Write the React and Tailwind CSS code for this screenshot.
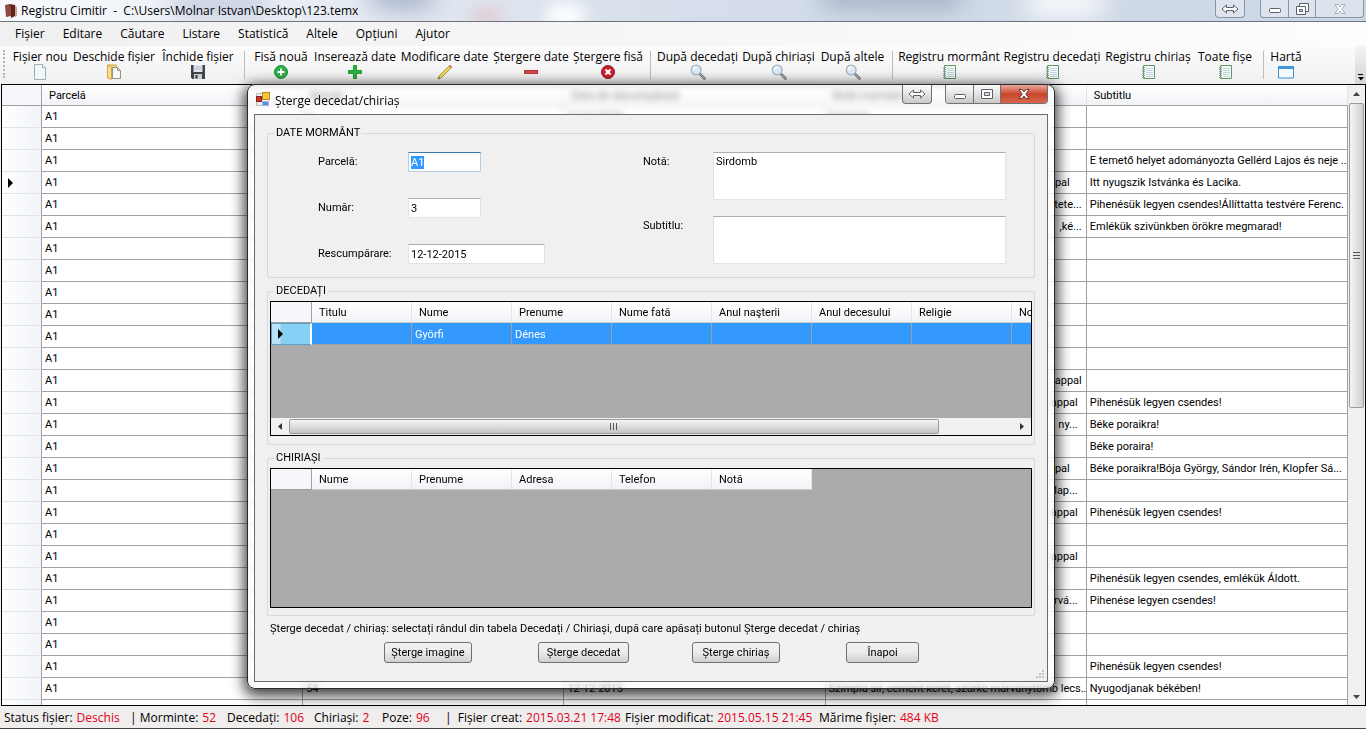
import { useEffect, useRef } from 'react'

const MENU = ['Fișier', 'Editare', 'Căutare', 'Listare', 'Statistică', 'Altele', 'Opțiuni', 'Ajutor']

const TOOLS = [
  { label: 'Fișier nou', icon: 'page', width: 'w-[62px]' },
  { label: 'Deschide fișier', icon: 'open', width: 'w-[86px]' },
  { label: 'Închide fișier', icon: 'save', width: 'w-[82px]' },
  { sep: true },
  { label: 'Fisă nouă', icon: 'addCircle', width: 'w-[62px]' },
  { label: 'Inserează date', icon: 'plus', width: 'w-[86px]' },
  { label: 'Modificare date', icon: 'pencil', width: 'w-[93px]' },
  { label: 'Ștergere date', icon: 'minus', width: 'w-[80px]' },
  { label: 'Ștergere fisă', icon: 'cancel', width: 'w-[74px]' },
  { sep: true },
  { label: 'După decedați', icon: 'search', width: 'w-[83px]' },
  { label: 'După chiriași', icon: 'search', width: 'w-[79px]' },
  { label: 'După altele', icon: 'search', width: 'w-[69px]' },
  { sep: true },
  { label: 'Registru mormânt', icon: 'notebook', width: 'w-[102px]' },
  { label: 'Registru decedați', icon: 'notebook', width: 'w-[104px]' },
  { label: 'Registru chiriaș', icon: 'notebook', width: 'w-[88px]' },
  { label: 'Toate fișe', icon: 'notebook', width: 'w-[66px]' },
  { sep: true },
  { label: 'Hartă', icon: 'window', width: 'w-[34px]' },
]

const ICONS = {
  page: (
    <svg width="16" height="16" viewBox="0 0 16 16">
      <path d="M2.5 .5h8l3 3v12h-11z" fill="#f1f8f8" stroke="#9fb0b0" />
      <path d="M10.5 .5v3h3" fill="#fff" stroke="#9fb0b0" />
    </svg>
  ),
  open: (
    <svg width="16" height="16" viewBox="0 0 16 16">
      <path d="M1.5 1h9v13h-9z" fill="#f3cf7c" stroke="#d3a545" />
      <path d="M6.5 3.5h5l3 3v8h-8z" fill="#f3fafb" stroke="#9a9478" />
      <path d="M11.500 3.500v3h3" fill="none" stroke="#9a9478" />
      <path d="M1.500 1l4 2.500v12l-4-2z" fill="#f8dc98" stroke="#d3a545" />
    </svg>
  ),
  save: (
    <svg width="16" height="16" viewBox="0 0 16 16">
      <path d="M1 1h14v14H2.500L1 13.500z" fill="#3d434b" />
      <path d="M3.500 1h9v7h-9z" fill="#dfe6ee" />
      <path d="M4.500 3h7M4.500 5h7" stroke="#b4bdc8" />
      <path d="M4 10h8v5H4z" fill="#c9ced5" />
      <path d="M5.500 11h2v3.500h-2z" fill="#2f343b" />
    </svg>
  ),
  addCircle: (
    <svg width="16" height="16" viewBox="0 0 16 16">
      <circle cx="8" cy="8" r="6.500" fill="#2fae45" stroke="#1d8f35" />
      <path d="M8 4.500v7M4.500 8h7" stroke="#fff" strokeWidth="2" />
    </svg>
  ),
  plus: (
    <svg width="16" height="16" viewBox="0 0 16 16">
      <path d="M6.500 1.500h3v5h5v3h-5v5h-3v-5h-5v-3h5z" fill="#27b53c" stroke="#1f9a34" />
    </svg>
  ),
  pencil: (
    <svg width="16" height="16" viewBox="0 0 16 16">
      <path d="M1 15l1.500-3.500L12 2l2 2-9.500 9.500z" fill="#ecd95c" stroke="#9c8a2c" strokeWidth=".8" />
      <path d="M12 2l1-1 2 2-1 1z" fill="#e2867c" stroke="#b0605a" strokeWidth=".6" />
      <path d="M1 15l.8-1.800 1 1z" fill="#333" />
    </svg>
  ),
  minus: (
    <svg width="16" height="16" viewBox="0 0 16 16">
      <rect x="1.500" y="6.500" width="13" height="3" fill="#d9474e" stroke="#b5333c" />
    </svg>
  ),
  cancel: (
    <svg width="16" height="16" viewBox="0 0 16 16">
      <circle cx="8" cy="8" r="6.500" fill="#c8202c" stroke="#a01822" />
      <path d="M5.500 5.500l5 5M10.500 5.500l-5 5" stroke="#fff" strokeWidth="2.200" />
    </svg>
  ),
  search: (
    <svg width="16" height="16" viewBox="0 0 16 16">
      <path d="M10 10l4.500 4.500" stroke="#777" strokeWidth="2.600" strokeLinecap="round" />
      <path d="M10.500 10.500l4 4" stroke="#c4c4c4" strokeLinecap="round" />
      <circle cx="6.200" cy="6" r="4.900" fill="#dcebf7" stroke="#a9b2ba" strokeWidth="1.300" />
      <path d="M3.500 5.500a3 3 0 0 1 3-2.300" fill="none" stroke="#fff" strokeWidth="1.200" />
    </svg>
  ),
  notebook: (
    <svg width="16" height="16" viewBox="0 0 16 16">
      <path d="M3.500 1.500h11v13h-11z" fill="#f4faf4" stroke="#5f9668" />
      <path d="M6 4.500h7M6 6.500h7M6 8.500h7M6 10.500h7M6 12.500h7" stroke="#c3d2e4" />
      <path d="M2 3.500h3M2 5.500h3M2 7.500h3M2 9.500h3M2 11.500h3M2 13.500h3" stroke="#8aa58f" />
    </svg>
  ),
  window: (
    <svg width="16" height="16" viewBox="0 0 16 16">
      <path d="M.5 2.500h15v11.500H.5z" fill="#f4f9fe" stroke="#3d8fd0" />
      <path d="M0 2h16v3H0z" fill="#3f97dc" />
    </svg>
  ),
}

// rows of the main grid: [number, redemption date, note, note padding, subtitle]
const ROWS = [
  ['1', '12-12-2015', 'Sírdomb', '', ''],
  [],
  ['', '', '', '', 'E temető helyet adományozta Gellérd Lajos és neje ...'],
  ['', '', 'pal', 'text-right pr-4', 'Itt nyugszik Istvánka és Lacika.'],
  ['', '', 'tete...', 'text-right pr-1', 'Pihenésük legyen csendes!Állíttatta testvére Ferenc.'],
  ['', '', ',ké...', 'text-right pr-1', 'Emlékük szivünkben örökre megmarad!'],
  [],
  [],
  [],
  [],
  [],
  [],
  ['', '', 'appal', 'text-right pr-1', ''],
  ['', '', 'appal', 'text-right pr-2', 'Pihenésük legyen csendes!'],
  ['', '', 'ny...', 'text-right pr-2', 'Béke poraikra!'],
  ['', '', '', '', 'Béke poraira!'],
  ['', '', 'pal', 'text-right pr-4', 'Béke poraikra!Bója György, Sándor Irén, Klopfer Sá...'],
  ['', '', 'lap...', 'text-right pr-2', ''],
  ['', '', 'appal', 'text-right pr-2', 'Pihenésük legyen csendes!'],
  [],
  ['', '', 'appal', 'text-right pr-2', ''],
  ['', '', '', '', 'Pihenésük legyen csendes, emlékük Áldott.'],
  ['', '', 'rvá...', 'text-right pr-2', 'Pihenése legyen csendes!'],
  [],
  [],
  ['', '', '', '', 'Pihenésük legyen csendes!'],
  ['54', '12-12-2015', 'Szimpla sír, cement keret, szürke márványtömb lecs...', '', 'Nyugodjanak békében!'],
]

const GRID_COLUMNS = ['Parcelă', 'Număr', 'Data de răscumpărare', 'Notă mormânt', 'Subtitlu']
const DECEASED_COLUMNS = ['Titulu', 'Nume', 'Prenume', 'Nume fată', 'Anul naşterii', 'Anul decesului', 'Religie', 'Notă']
const TENANT_COLUMNS = ['Nume', 'Prenume', 'Adresa', 'Telefon', 'Notă']

const STATUS = [
  { label: 'Status fișier:', value: 'Deschis', width: 'w-[126px]' },
  { label: '| Morminte:', value: '52', width: 'w-[97px]' },
  { label: 'Decedați:', value: '106', width: 'w-[87px]' },
  { label: 'Chiriași:', value: '2', width: 'w-[68px]' },
  { label: 'Poze:', value: '96', width: 'w-[63px]' },
  { label: '|  Fișier creat:', value: '2015.03.21 17:48', width: 'w-[180px]' },
  { label: 'Fișier modificat:', value: '2015.05.15 21:45', width: 'w-[194px]' },
  { label: 'Mărime fișier:', value: '484 KB', width: 'w-[140px]' },
]

function ResizeGlyph() {
  return (
    <svg width="18" height="10" viewBox="0 0 18 10">
      <path d="M1 5l4.500-4v2.500h7V1L17 5l-4.500 4V6.500h-7V9z" fill="#fff" stroke="#5c6068" />
    </svg>
  )
}

function CloseGlyph({ stroke }) {
  return (
    <svg width="12" height="10" viewBox="0 0 12 10">
      <path d="M1 .5h3l2 2.500L8 .5h3L7.800 5 11 9.500H8L6 7 4 9.500H1L4.200 5z" fill="#fff" stroke={stroke} />
    </svg>
  )
}

function MinGlyph() {
  return (
    <svg width="12" height="5" viewBox="0 0 12 5">
      <rect x=".5" y=".5" width="11" height="4" rx="1" fill="#fff" stroke="#5c6068" />
    </svg>
  )
}

function TitleBar() {
  return (
    <header className="relative h-[22px] shrink-0 overflow-hidden border-b border-[#6b737d] bg-linear-to-r from-[#f7f9fc] via-[#d5deea] to-[#ccd7e5]">
      <div className="absolute -top-2 left-[170px] h-6 w-24 rounded-full bg-[#9aa6c6]/50 blur-md" />
      <div className="absolute -top-4 left-[370px] h-6 w-16 rounded-full bg-[#7482a8]/60 blur-md" />
      <div className="absolute top-2 left-[470px] h-4 w-8 rounded-full bg-[#e2b4b8]/60 blur-sm" />
      <div className="absolute top-1 left-[545px] h-6 w-10 rounded-full bg-white blur-sm" />
      <div className="absolute -top-4 left-[820px] h-6 w-36 rounded-full bg-[#8c98b4]/70 blur-md" />
      <div className="absolute -top-2 left-[1025px] h-6 w-20 rounded-full bg-white blur-md" />
      <div className="relative flex h-full items-center pl-1">
        <svg width="14" height="16" viewBox="0 0 14 16">
          <path d="M1 2l5-1 1 12-5 1z" fill="#8d4a3c" />
          <path d="M6 1l5 1v11l-4 2z" fill="#5d241d" />
          <path d="M11 3l2 1v9l-2 1z" fill="#c9a58f" />
        </svg>
        <h1 className="ml-[3px] flex-1 text-xs whitespace-pre text-black">Registru Cimitir  -  C:\Users\Molnar Istvan\Desktop\123.temx</h1>
        <button aria-label="Redimensionare" className="mr-[15px] flex h-[18px] w-[30px] items-center justify-center self-start rounded-b border border-t-0 border-[#8a94a3] bg-white/30">
          <ResizeGlyph />
        </button>
        <div className="mr-[2px] flex h-[18px] self-start overflow-hidden rounded-b border border-t-0 border-[#8a94a3] bg-white/30">
          <button aria-label="Minimizare" className="flex w-[28px] items-center justify-center border-r border-[#8a94a3] pt-1">
            <MinGlyph />
          </button>
          <button aria-label="Restaurare" className="flex w-[27px] items-center justify-center border-r border-[#8a94a3]">
            <svg width="13" height="12" viewBox="0 0 13 12">
              <path d="M3.500 .5h9v8h-9z" fill="#fff" stroke="#5c6068" />
              <path d="M.5 3.500h9v8h-9z" fill="#fff" stroke="#5c6068" />
              <path d="M3.500 6.500h3v2h-3z" fill="#dde" stroke="#5c6068" />
            </svg>
          </button>
          <button aria-label="Închidere" className="flex w-[47px] items-center justify-center">
            <CloseGlyph stroke="#a4adb9" />
          </button>
        </div>
      </div>
    </header>
  )
}

function Toolbar() {
  return (
    <div className="flex h-[38px] shrink-0 items-stretch bg-linear-to-b from-[#fcfcfc] to-[#f0f0f0]">
      <div className="mt-1 mr-1 ml-[3px] h-7 w-[2px] border-l-2 border-dotted border-[#b5b5b5]" />
      {TOOLS.map((tool, i) =>
        tool.sep ? (
          <div key={i} className="mx-[5px] mt-[5px] h-7 w-px shrink-0 bg-[#bdbdbd]" />
        ) : (
          <button key={i} className={`${tool.width} flex shrink-0 flex-col items-center pt-[3px] text-xs leading-[15px] whitespace-nowrap`}>
            {tool.label}
            {ICONS[tool.icon]}
          </button>
        ),
      )}
      <button aria-label="Mai multe" className="ml-auto flex w-[11px] flex-col items-center justify-end bg-linear-to-b from-[#f4f4f4] to-[#d4d4d4] pb-[3px]">
        <svg width="6" height="7" viewBox="0 0 6 7">
          <path d="M0 .5h5" stroke="#000" />
          <path d="M0 3h6L3 6.500z" fill="#000" />
        </svg>
      </button>
    </div>
  )
}

function MainGrid() {
  return (
    <main className="ml-px flex min-h-0 flex-1 border border-black bg-white font-[Roboto,'Liberation_Sans',sans-serif] text-[11px]">
      <div className="min-w-0 flex-1 overflow-hidden">
        <table className="w-full table-fixed border-separate border-spacing-0">
          <thead>
            <tr className="h-[21px]">
              <th className="w-10 border-r border-b border-[#a0a0a0] bg-[#f5f7fa]" />
              {GRID_COLUMNS.map((name) => (
                <th key={name} className="border-r border-b border-r-[#e1e4e8] border-b-[#a0a0a0] bg-linear-to-b from-white to-[#f1f3f6] pt-[2px] pl-[7px] text-left font-normal">
                  {name}
                </th>
              ))}
            </tr>
          </thead>
          <tbody>
            {ROWS.map(([number = '', date = '', note = '', notePad = '', subtitle = ''], i) => (
              <tr key={i} className="h-[22px] [&>td]:overflow-hidden [&>td]:border-r [&>td]:border-b [&>td]:border-[#a0a0a0] [&>td]:pt-[2px] [&>td]:whitespace-nowrap">
                <th className="border-r border-b border-r-[#a0a0a0] border-b-[#e1e4e8] bg-linear-to-r from-white to-[#f1f4f8] pl-[6px]">
                  {i === 3 && (
                    <svg width="6" height="10" viewBox="0 0 6 10">
                      <path d="M0 0l5 5-5 5z" fill="#000" />
                    </svg>
                  )}
                </th>
                <td className="pl-[3px]">A1</td>
                <td className="pl-[3px]">{number}</td>
                <td className="pl-[3px]">{date}</td>
                <td className={notePad || 'pl-[3px]'}>{note}</td>
                <td className="pl-[3px]">{subtitle}</td>
              </tr>
            ))}
            <tr className="h-[22px] [&>td]:border-r [&>td]:border-[#a0a0a0]">
              <th className="border-r border-[#a0a0a0] bg-linear-to-r from-white to-[#f1f4f8]" />
              <td /><td /><td /><td /><td />
            </tr>
          </tbody>
        </table>
      </div>
      <div className="flex w-[17px] shrink-0 flex-col items-center bg-[#f0f0f0]">
        <button aria-label="Sus" className="flex h-[18px] w-full items-center justify-center">
          <svg width="7" height="4" viewBox="0 0 7 4"><path d="M0 4l3.500-4L7 4z" fill="#444" /></svg>
        </button>
        <div className="flex h-[305px] w-[15px] items-center justify-center rounded-xs border border-[#9a9a9a] bg-linear-to-r from-[#f5f5f5] to-[#cfcfcf]">
          <svg width="7" height="7" viewBox="0 0 7 7"><path d="M0 .5h7M0 3.500h7M0 6.500h7" stroke="#555" /></svg>
        </div>
        <button aria-label="Jos" className="mt-auto flex h-[17px] w-full items-center justify-center">
          <svg width="7" height="4" viewBox="0 0 7 4"><path d="M0 0h7L3.500 4z" fill="#444" /></svg>
        </button>
      </div>
    </main>
  )
}

function DataTable({ columns, rows }) {
  return (
    <table className="w-max border-separate border-spacing-0">
      <thead>
        <tr className="h-[21px]">
          <th className="w-[41px] min-w-[41px] border-r border-b border-[#a0a0a0] bg-[#f5f7fa]" />
          {columns.map((name) => (
            <th key={name} className="w-[100px] min-w-[100px] border-r border-b border-r-[#e1e4e8] border-b-[#c9cbce] bg-linear-to-b from-white to-[#f1f3f6] pt-[2px] pl-[7px] text-left font-normal">
              {name}
            </th>
          ))}
        </tr>
      </thead>
      <tbody>
        {rows.map((row, i) => (
          <tr key={i} className="h-[22px] bg-[#3399ff] text-white">
            <th className="border border-r-2 border-[#5f9fc4] border-r-white bg-linear-to-r from-[#b9e2f8] from-20% to-[#86d0f5] to-25% pl-[6px]">
              <svg width="6" height="10" viewBox="0 0 6 10">
                <path d="M0 0l5 5-5 5z" fill="#000" />
              </svg>
            </th>
            {row.map((cell, j) => (
              <td key={j} className="border-r border-b border-[#a0a0a0] pt-[2px] pl-[3px]">{cell}</td>
            ))}
          </tr>
        ))}
      </tbody>
    </table>
  )
}

const FIELD = 'block border border-[#e2e3ea] border-t-[#abadb3] bg-white px-[2px] outline-none'
const GROUP = 'mx-3 min-w-0 border border-[#d8d9da] rounded-xs'
const BUTTON = 'h-[21px] rounded-[3px] border border-[#707070] bg-linear-to-b from-[#f3f3f3] via-[#ebebeb] to-[#cfcfcf]'

function DeleteDialog() {
  const parcelRef = useRef(null)

  useEffect(() => {
    parcelRef.current.focus()
    parcelRef.current.select()
  }, [])

  return (
    <div className="absolute top-[84px] left-[247px] w-[808px] rounded-lg [box-shadow:0_4px_14px_3px_rgba(0,0,0,0.75)]">
      <section
        role="dialog"
        aria-label="Șterge decedat/chiriaș"
        className="rounded-lg border border-[#2b2b2b] bg-white/50 px-[6px] pb-[6px] backdrop-blur-[3px]"
      >
        <div className="flex h-[29px] items-center pl-[2px]">
          <svg width="15" height="15" viewBox="0 0 15 15">
            <path d="M.5 1.500h7v4h-7zM.5 9.500h7v4h-7z" fill="#eee" stroke="#bbb" />
            <rect x="6.500" y=".5" width="7" height="7" fill="#f5c63a" stroke="#b78a1c" />
            <rect x=".5" y="4.500" width="5" height="5" fill="#c8382c" stroke="#8a211a" />
            <rect x="6.500" y="9.500" width="6" height="4" fill="#5d8fe0" stroke="#9ab8ec" />
          </svg>
          <h2 className="ml-1 flex-1 pt-[2px] text-xs">Șterge decedat/chiriaș</h2>
          <button aria-label="Redimensionare" className="mr-[13px] flex h-[19px] w-[30px] items-center justify-center self-start rounded-b border border-t-0 border-[#6f7378] bg-linear-to-b from-white/80 to-[#bdbdbd]/80">
            <ResizeGlyph />
          </button>
          <div className="flex h-[19px] self-start overflow-hidden rounded-b border border-t-0 border-[#6f7378]">
            <button aria-label="Minimizare" className="flex w-[28px] items-center justify-center border-r border-[#6f7378] bg-linear-to-b from-white/80 to-[#bdbdbd]/80 pt-1">
              <MinGlyph />
            </button>
            <button aria-label="Maximizare" className="flex w-[27px] items-center justify-center border-r border-[#6f7378] bg-linear-to-b from-white/80 to-[#bdbdbd]/80">
              <svg width="12" height="10" viewBox="0 0 12 10">
                <path d="M.5 .5h11v9H.5z" fill="#fff" stroke="#5c6068" />
                <path d="M3.500 3.500h5v3h-5z" fill="#ddd" stroke="#5c6068" />
              </svg>
            </button>
            <button aria-label="Închidere" className="flex w-[46px] items-center justify-center bg-linear-to-b from-[#e7a99c] via-[#c9452b] to-[#d9654a]">
              <CloseGlyph stroke="#5e3a38" />
            </button>
          </div>
        </div>

        <div className="relative h-[568px] border border-[#6b6b6b] bg-[#f0f0f0] pt-[11px] font-[Roboto,'Liberation_Sans',sans-serif] text-[11px] leading-[14px]">
          <fieldset className={`${GROUP} h-[152px]`}>
            <legend className="ml-[6px] px-[2px]">DATE MORMÂNT</legend>
            <div className="mt-3 mr-7 ml-[50px] flex">
              <div className="flex w-[325px] shrink-0 flex-col gap-[26px]">
                <div className="flex items-center">
                  <label htmlFor="parcela" className="w-[90px]">Parcelă:</label>
                  <input id="parcela" ref={parcelRef} defaultValue="A1" className="h-5 w-[73px] border border-[#b5cfe7] border-t-[#3d7bad] bg-white px-[2px] outline-none selection:bg-[#3399ff] selection:text-white" />
                </div>
                <div className="flex items-center">
                  <label htmlFor="numar" className="w-[90px]">Număr:</label>
                  <input id="numar" defaultValue="3" className={`${FIELD} h-5 w-[73px]`} />
                </div>
                <div className="flex items-center">
                  <label htmlFor="rescumparare" className="w-[90px]">Rescumpărare:</label>
                  <input id="rescumparare" defaultValue="12-12-2015" className={`${FIELD} h-5 w-[137px]`} />
                </div>
              </div>
              <div className="flex flex-1 flex-col gap-4">
                <div className="flex">
                  <label htmlFor="nota" className="w-[70px] pt-[3px]">Notă:</label>
                  <textarea id="nota" defaultValue="Sirdomb" className={`${FIELD} h-12 flex-1 resize-none pt-[2px]`} />
                </div>
                <div className="flex">
                  <label htmlFor="subtitlu" className="w-[70px] pt-[3px]">Subtitlu:</label>
                  <textarea id="subtitlu" className={`${FIELD} h-12 flex-1 resize-none pt-[2px]`} />
                </div>
              </div>
            </div>
          </fieldset>

          <fieldset className={`${GROUP} mt-[6px] h-[161px]`}>
            <legend className="ml-[6px] px-[2px]">DECEDAȚI</legend>
            <div className="mx-[2px] mt-[3px] flex h-[135px] flex-col overflow-hidden border border-black bg-[#ababab]">
              <DataTable columns={DECEASED_COLUMNS} rows={[['', 'Györfi', 'Dénes', '', '', '', '', '']]} />
              <div className="mt-auto flex h-[17px] items-center bg-[#f0f0f0]">
                <button aria-label="Stânga" className="flex h-full w-[18px] items-center justify-center">
                  <svg width="4" height="7" viewBox="0 0 4 7"><path d="M4 0L0 3.500 4 7z" fill="#333" /></svg>
                </button>
                <div className="flex h-[15px] w-[650px] items-center justify-center rounded-xs border border-[#9a9a9a] bg-linear-to-b from-[#f5f5f5] to-[#c6c6c6]">
                  <svg width="8" height="7" viewBox="0 0 8 7"><path d="M.5 0v7M3.500 0v7M6.500 0v7" stroke="#555" /></svg>
                </div>
                <button aria-label="Dreapta" className="ml-auto flex h-full w-[18px] items-center justify-center">
                  <svg width="4" height="7" viewBox="0 0 4 7"><path d="M0 0l4 3.500L0 7z" fill="#333" /></svg>
                </button>
              </div>
            </div>
          </fieldset>

          <fieldset className={`${GROUP} mt-[6px] h-[165px]`}>
            <legend className="ml-[6px] px-[2px]">CHIRIAȘI</legend>
            <div className="mx-[2px] mt-[3px] h-[140px] overflow-hidden border border-black bg-[#ababab]">
              <DataTable columns={TENANT_COLUMNS} rows={[]} />
            </div>
          </fieldset>

          <p className="mt-[6px] ml-[15px]">
            Șterge decedat / chiriaș: selectați rândul din tabela Decedați / Chiriași, după care apăsați butonul Șterge decedat / chiriaș
          </p>
          <div className="mt-[6px] ml-[129px] flex">
            <button className={`${BUTTON} mr-[66px] w-[88px]`}>Șterge imagine</button>
            <button className={`${BUTTON} mr-[63px] w-[91px]`}>Șterge decedat</button>
            <button className={`${BUTTON} mr-[66px] w-[88px]`}>Șterge chiriaș</button>
            <button className={`${BUTTON} w-[73px]`}>Înapoi</button>
          </div>
          <svg className="absolute right-[2px] bottom-[2px]" width="10" height="10" viewBox="0 0 10 10">
            <path d="M7 1h2v2H7zM4 4h2v2H4zM7 4h2v2H7zM1 7h2v2H1zM4 7h2v2H4zM7 7h2v2H7z" fill="#c4c4c4" />
          </svg>
        </div>
      </section>
    </div>
  )
}

export default function App() {
  return (
    <div className="relative flex h-screen flex-col overflow-hidden bg-[#f0f0f0] font-['Open_Sans','Segoe_UI',sans-serif] text-xs text-black">
      <TitleBar />
      <nav className="flex h-6 shrink-0 items-center bg-linear-to-r from-[#f0f0f0] to-[#fdfdfd] pl-[6px]">
        {MENU.map((item) => (
          <button key={item} className="px-[9px] text-xs">{item}</button>
        ))}
      </nav>
      <Toolbar />
      <MainGrid />
      <footer className="flex h-[23px] shrink-0 items-center border-b border-[#444] bg-[#f0eded] pt-[2px] pl-1 text-xs whitespace-pre">
        {STATUS.map(({ label, value, width }) => (
          <div key={label} className={`${width} flex shrink-0 gap-1`}>
            <span>{label}</span>
            <span className="text-[#e2001a]">{value}</span>
          </div>
        ))}
      </footer>
      <DeleteDialog />
    </div>
  )
}
